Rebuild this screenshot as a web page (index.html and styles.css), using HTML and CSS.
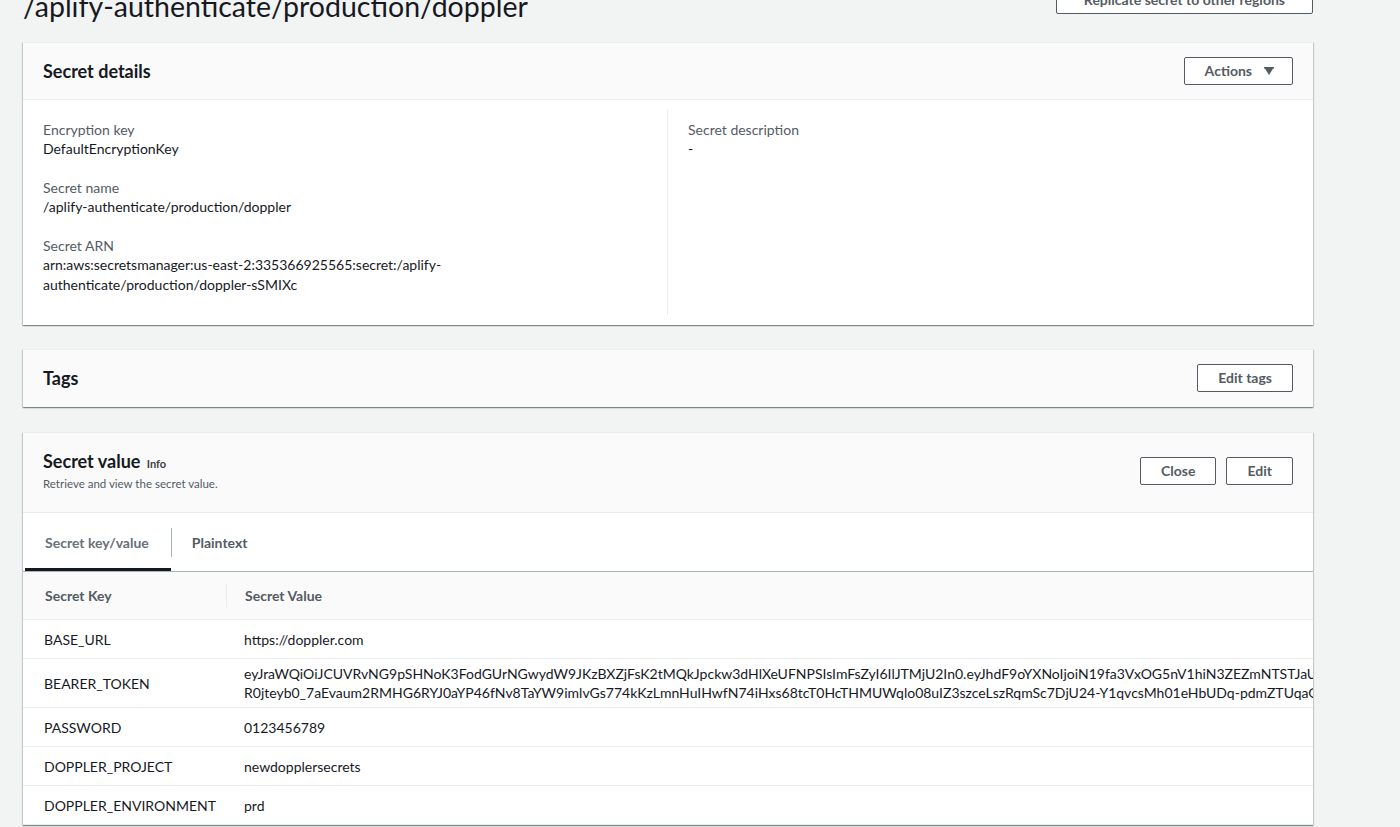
FILE: index.html
```html
<!DOCTYPE html>
<html lang="en">
<head>
<meta charset="utf-8">
<title>/aplify-authenticate/production/doppler</title>
<link rel="stylesheet" href="styles.css">
</head>
<body>
<div class="page">
  <div class="page-header">
    <h1 class="page-title">/aplify-authenticate/production/doppler</h1>
    <button class="btn btn-top">Replicate secret to other regions</button>
  </div>

  <section class="panel">
    <div class="panel-header">
      <h2 class="panel-title">Secret details</h2>
      <button class="btn btn-actions">Actions
        <svg class="caret" width="10" height="8" viewBox="0 0 10 8"><polygon points="0,0 10,0 5,8" fill="#545b64"/><rect x="0" y="0" width="10" height="1.5" fill="#545b64"/></svg>
      </button>
    </div>
    <div class="details-body">
      <div class="details-col details-col-left">
        <div class="kv">
          <div class="kv-label">Encryption key</div>
          <div class="kv-value">DefaultEncryptionKey</div>
        </div>
        <div class="kv">
          <div class="kv-label">Secret name</div>
          <div class="kv-value">/aplify-authenticate/production/doppler</div>
        </div>
        <div class="kv">
          <div class="kv-label">Secret ARN</div>
          <div class="kv-value arn">arn:aws:secretsmanager:us-east-2:335366925565:secret:/aplify-<br>authenticate/production/doppler-sSMIXc</div>
        </div>
      </div>
      <div class="details-col">
        <div class="kv">
          <div class="kv-label">Secret description</div>
          <div class="kv-value">-</div>
        </div>
      </div>
    </div>
  </section>

  <section class="panel panel-tags">
    <div class="panel-header panel-header-only">
      <h2 class="panel-title">Tags</h2>
      <button class="btn">Edit tags</button>
    </div>
  </section>

  <section class="panel">
    <div class="panel-header panel-header-tall">
      <div class="header-text">
        <h2 class="panel-title panel-title-sm">Secret value <span class="info">Info</span></h2>
        <div class="panel-desc">Retrieve and view the secret value.</div>
      </div>
      <div class="btn-group">
        <button class="btn">Close</button>
        <button class="btn">Edit</button>
      </div>
    </div>
    <div class="tabs">
      <div class="tab tab-active">Secret key/value</div>
      <div class="tab tab-divided">Plaintext</div>
    </div>
    <div class="table-wrap">
      <table class="kv-table">
        <colgroup><col class="col-key"><col></colgroup>
        <thead>
          <tr><th class="th-key">Secret Key</th><th class="th-value">Secret Value</th></tr>
        </thead>
        <tbody>
          <tr><td class="td-key"><div class="cell">BASE_URL</div></td><td class="td-value"><div class="cell">https://doppler.com</div></td></tr>
          <tr><td class="td-key"><div class="cell">BEARER_TOKEN</div></td><td class="td-value"><div class="cell cell-multi"><span class="line">eyJraWQiOiJCUVRvNG9pSHNoK3FodGUrNGwydW9JKzBXZjFsK2tMQkJpckw3dHlXeUFNPSIsImFsZyI6IlJTMjU2In0.eyJhdF9oYXNoIjoiN19fa3VxOG5nV1hiN3ZEZmNTSTJaUSIsInN1YiI6ImQ0YjY1ODc4LTRkYzMtNDQ3ZC04YjE2LTU0MzdmNTRmODgxNiIsImF1ZCI6IjRnNW4ydW9lYjd0a2Q4Z3N2MmRxbjFyc2V1IiwiZW1haWxfdmVyaWZpZWQiOnRydWUsInRva2VuX3VzZSI6ImlkIiwiYXV0aF90aW1lIjoxNjQ</span><span class="line">R0jteyb0_7aEvaum2RMHG6RYJ0aYP46fNv8TaYW9imlvGs774kKzLmnHuIHwfN74iHxs68tcT0HcTHMUWqlo08uIZ3szceLszRqmSc7DjU24-Y1qvcsMh01eHbUDq-pdmZTUqaQ1eR3kLx9wVtQp2nZs8Yh4mJcB7uFgD0aXoEi5lKrN6vWqT</span></div></td></tr>
          <tr><td class="td-key"><div class="cell">PASSWORD</div></td><td class="td-value"><div class="cell">0123456789</div></td></tr>
          <tr><td class="td-key"><div class="cell">DOPPLER_PROJECT</div></td><td class="td-value"><div class="cell">newdopplersecrets</div></td></tr>
          <tr><td class="td-key"><div class="cell">DOPPLER_ENVIRONMENT</div></td><td class="td-value"><div class="cell">prd</div></td></tr>
        </tbody>
      </table>
    </div>
  </section>
</div>
</body>
</html>
```

FILE: styles.css
```css
html {
  overflow: hidden;
}
body {
  margin: 0;
  background: #f2f3f3;
  color: #16191f;
  font-family: Lato, "Open Sans", sans-serif;
  font-size: 14px;
}
.page {
  padding: 0 87px 0 23px;
}
.page-header {
  display: flex;
  justify-content: space-between;
  align-items: flex-start;
  margin-top: -14px;
  margin-bottom: 18px;
}
.page-title {
  margin: 3px 0 0 0;
  font-size: 28.5px;
  line-height: 35px;
  font-weight: 400;
  color: #16191f;
}
.btn {
  font-family: inherit;
  font-size: 14px;
  font-weight: 700;
  line-height: 18px;
  color: #545b64;
  background: #fff;
  border: 1px solid #545b64;
  border-radius: 2px;
  padding: 4px 20px;
  display: inline-flex;
  align-items: center;
  cursor: pointer;
}
.btn-top {
  padding: 4px 27px;
}
.btn-actions {
  padding: 4px 18px 4px 20px;
}
.btn-actions .caret {
  margin-left: 12px;
}
.btn-group {
  display: flex;
  gap: 10px;
}
.panel {
  background: #fff;
  border-top: 1px solid #eaeded;
  box-shadow: 0 1px 1px 0 rgba(0, 28, 36, 0.3), 1px 1px 1px 0 rgba(0, 28, 36, 0.15), -1px 1px 1px 0 rgba(0, 28, 36, 0.15);
  margin-bottom: 24px;
}
.panel-tags {
  margin-bottom: 25px;
}
.panel-header {
  display: flex;
  justify-content: space-between;
  align-items: center;
  padding: 14px 20px 14px;
  background: #fafafa;
  border-bottom: 1px solid #eaeded;
}
.panel-header-only {
  border-bottom: 0;
  padding-bottom: 15px;
}
.panel-header-tall {
  padding: 16px 20px 20px;
}
.panel-title {
  margin: 0;
  font-size: 18px;
  line-height: 28px;
  font-weight: 700;
  color: #16191f;
}
.panel-title-sm {
  line-height: 24px;
}
.info {
  font-size: 11px;
  font-weight: 700;
  color: #3b4148;
  margin-left: 2px;
}
.panel-desc {
  font-size: 11.5px;
  line-height: 16px;
  color: #545b64;
}
.details-body {
  display: grid;
  grid-template-columns: 1fr 1fr;
  padding: 10px 0;
}
.details-col {
  padding: 10px 20px 20px;
}
.details-col-left {
  border-right: 1px solid #eaeded;
}
.kv {
  margin-bottom: 20px;
}
.kv:last-child {
  margin-bottom: 0;
}
.kv-label {
  color: #545b64;
  line-height: 19px;
}
.kv-value {
  line-height: 19px;
  color: #16191f;
}
.arn {
  line-height: 20px;
}
.tabs {
  display: flex;
  padding-left: 2px;
  border-bottom: 1px solid #aab7b8;
}
.tab {
  position: relative;
  height: 58px;
  padding: 0 21px;
  display: flex;
  align-items: center;
  font-weight: 700;
  color: #545b64;
}
.tab-active {
  padding: 0 22px 0 20px;
  color: #687078;
}
.tab-active::after {
  content: "";
  position: absolute;
  left: 0;
  right: 0;
  bottom: 0;
  height: 3px;
  background: #16191f;
}
.tab-divided::before {
  content: "";
  position: absolute;
  left: 0;
  top: 15px;
  height: 29px;
  width: 1px;
  background: #aab7b8;
}
.table-wrap {
  overflow-x: auto;
}
.table-wrap::-webkit-scrollbar {
  height: 8px;
}
.table-wrap::-webkit-scrollbar-track {
  background: #fff;
}
.table-wrap::-webkit-scrollbar-thumb {
  background: #c1c1c1;
  border-radius: 4px;
}
.kv-table {
  width: 6880px;
  table-layout: fixed;
  border-collapse: collapse;
}
.col-key {
  width: 203px;
}
.kv-table th {
  position: relative;
  height: 47px;
  padding: 0;
  text-align: left;
  font-weight: 700;
  color: #545b64;
  background: #fafafa;
  border-bottom: 1px solid #eaeded;
}
.th-key {
  padding-left: 22px !important;
}
.th-value {
  padding-left: 19px !important;
}
.th-value::before {
  content: "";
  position: absolute;
  left: 0;
  top: 12px;
  height: 23px;
  width: 1px;
  background: #eaeded;
}
.kv-table td {
  padding: 5px 0;
  border-bottom: 1px solid #eaeded;
  vertical-align: middle;
}
.td-key {
  padding-left: 21px !important;
}
.td-value {
  padding-left: 18px !important;
}
.cell {
  min-height: 28px;
  line-height: 19px;
  display: flex;
  align-items: center;
  white-space: nowrap;
}
.cell-multi {
  flex-direction: column;
  align-items: flex-start;
}
.line {
  display: block;
  white-space: nowrap;
}
```
